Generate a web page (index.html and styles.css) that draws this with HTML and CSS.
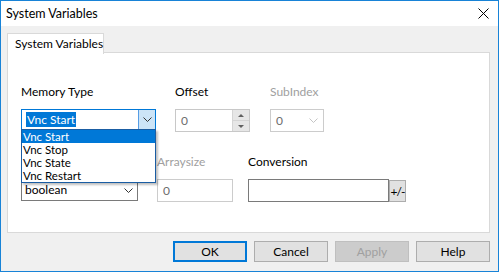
FILE: index.html
```html
<!DOCTYPE html>
<html lang="en">
<head>
    <meta charset="UTF-8">
    <title>System Variables</title>
    <link rel="stylesheet" href="styles.css">
</head>
<body>

<div class="window">
    <div class="titlebar">
        <span class="title">System Variables</span>
        <svg class="close" width="11" height="11" viewBox="0 0 11 11">
            <path d="M0.5 0.5 L10.5 10.5 M10.5 0.5 L0.5 10.5" stroke="#000" stroke-width="1"/>
        </svg>
    </div>

    <div class="content">
        <div class="tabs">
            <div class="tab">System Variables</div>
        </div>

        <div class="panel">
            <div class="row row-top">
                <div class="field field-memory">
                    <label>Memory Type</label>
                    <div class="combo combo-focus">
                        <span class="combo-text"><span class="selected">Vnc Start</span></span>
                        <span class="combo-btn active">
                            <svg width="9" height="5" viewBox="0 0 9 5"><path d="M0.5 0.5 L4.5 4.5 L8.5 0.5" fill="none" stroke="#333" stroke-width="1"/></svg>
                        </span>
                    </div>
                    <ul class="droplist">
                        <li class="current">Vnc Start</li>
                        <li>Vnc Stop</li>
                        <li>Vnc State</li>
                        <li>Vnc Restart</li>
                    </ul>
                </div>

                <div class="field field-offset">
                    <label>Offset</label>
                    <div class="spinner">
                        <span class="spin-text">0</span>
                        <span class="spin-btns">
                            <span class="spin-up"></span>
                            <span class="spin-down"></span>
                        </span>
                    </div>
                </div>

                <div class="field field-subindex">
                    <label class="disabled">SubIndex</label>
                    <div class="combo combo-disabled">
                        <span class="combo-text dim">0</span>
                        <span class="combo-btn">
                            <svg width="9" height="5" viewBox="0 0 9 5"><path d="M0.5 0.5 L4.5 4.5 L8.5 0.5" fill="none" stroke="#c4c4c4" stroke-width="1"/></svg>
                        </span>
                    </div>
                </div>
            </div>

            <div class="row row-bottom">
                <div class="field field-type">
                    <div class="combo combo-plain">
                        <span class="combo-text">boolean</span>
                        <span class="combo-btn">
                            <svg width="9" height="5" viewBox="0 0 9 5"><path d="M0.5 0.5 L4.5 4.5 L8.5 0.5" fill="none" stroke="#333" stroke-width="1"/></svg>
                        </span>
                    </div>
                </div>

                <div class="field field-arraysize">
                    <label class="disabled">Arraysize</label>
                    <div class="textbox textbox-disabled">0</div>
                </div>

                <div class="field field-conversion">
                    <label>Conversion</label>
                    <div class="conversion">
                        <div class="textbox textbox-wide"></div>
                        <button class="toggle">+/-</button>
                    </div>
                </div>
            </div>
        </div>

        <div class="buttons">
            <button class="btn btn-default">OK</button>
            <button class="btn">Cancel</button>
            <button class="btn btn-disabled">Apply</button>
            <button class="btn">Help</button>
        </div>
    </div>
</div>

</body>
</html>
```

FILE: styles.css
```css
* {
    box-sizing: border-box;
}

body {
    margin: 0;
    font-family: Lato, "Noto Sans", sans-serif;
    font-size: 12px;
    color: #000;
}

.window {
    width: 499px;
    height: 272px;
    border: 1px solid #1883d7;
    background: #f0f0f0;
}

.titlebar {
    height: 25px;
    background: #fff;
    display: flex;
    align-items: center;
    justify-content: space-between;
    padding: 0 9px 1px 5px;
}

.title {
    font-size: 12.5px;
}

.close {
    margin-top: 1px;
}

.content {
    padding: 7px 8px 0 6px;
}

.tabs {
    display: flex;
    height: 20px;
    position: relative;
    z-index: 1;
    margin-bottom: -1px;
}

.tab {
    width: 97px;
    height: 21px;
    background: #fff;
    border: 1px solid #d9d9d9;
    border-bottom: none;
    padding: 1px 0 0 7px;
    line-height: 17px;
    white-space: nowrap;
}

.panel {
    width: 483px;
    height: 181px;
    background: #fff;
    border: 1px solid #d9d9d9;
    padding: 31px 0 0 13px;
}

.row {
    display: flex;
    align-items: flex-start;
}

.row-bottom {
    margin-top: 22px;
}

.field {
    display: flex;
    flex-direction: column;
    position: relative;
}

.field label {
    height: 15px;
    line-height: 15px;
    margin-bottom: 10px;
    white-space: nowrap;
}

.field label.disabled {
    color: #a0a0a0;
}

.field-memory {
    width: 135px;
}

.field-offset {
    width: 75px;
    margin-left: 19px;
}

.field-subindex {
    width: 54px;
    margin-left: 20px;
}

.field-type {
    width: 117px;
    margin-top: 25px;
}

.field-arraysize {
    width: 76px;
    margin-left: 19px;
}

.field-conversion {
    margin-left: 15px;
}

/* combo boxes */
.combo {
    display: flex;
    height: 21px;
    border: 1px solid #7a7a7a;
    background: #fff;
}

.combo-text {
    flex: 1;
    padding-left: 3px;
    line-height: 19px;
}

.combo-text.dim {
    color: #6d6d6d;
    padding-left: 5px;
}

.combo-btn {
    width: 17px;
    display: flex;
    align-items: center;
    justify-content: center;
}

.combo-focus {
    border-color: #0078d7;
}

.combo-focus .combo-text {
    padding: 2px 0 0 4px;
    line-height: 15px;
}

.selected {
    background: #0078d7;
    color: #fff;
    display: inline-block;
    height: 15px;
    padding: 0 1px;
}

.combo-btn.active {
    background: #cce4f7;
    border-left: 1px solid #569de5;
}

.combo-disabled {
    height: 23px;
    border-color: #cccccc;
}

.combo-disabled .combo-text {
    line-height: 21px;
}

.combo-disabled .combo-btn {
    width: 20px;
}

.combo-plain {
    height: 22px;
}

.combo-plain .combo-text {
    line-height: 20px;
}

/* dropdown list of the memory type box */
.droplist {
    position: absolute;
    top: 45px;
    left: 0;
    width: 135px;
    margin: 0;
    padding: 0;
    list-style: none;
    background: #fff;
    border: 1px solid #1a5da3;
    box-shadow: 2px 2px 2px rgba(0, 0, 0, 0.25);
    z-index: 5;
}

.droplist li {
    height: 13px;
    line-height: 13px;
    font-size: 11.5px;
    padding-left: 1px;
    overflow: hidden;
}

.droplist li.current {
    background: #0078d7;
    color: #fff;
}

/* spinner */
.spinner {
    display: flex;
    height: 23px;
    border: 1px solid #c8c8c8;
    background: #fff;
}

.spin-text {
    flex: 1;
    padding-left: 5px;
    line-height: 21px;
    color: #6d6d6d;
}

.spin-btns {
    width: 17px;
    display: flex;
    flex-direction: column;
    border-left: 1px solid #d4d4d4;
}

.spin-up,
.spin-down {
    flex: 1;
    background: #e6e6e6;
    display: flex;
    align-items: center;
    justify-content: center;
}

.spin-up {
    border-bottom: 1px solid #d4d4d4;
}

.spin-up::after {
    content: "";
    border-left: 3px solid transparent;
    border-right: 3px solid transparent;
    border-bottom: 3px solid #606060;
}

.spin-down::after {
    content: "";
    border-left: 3px solid transparent;
    border-right: 3px solid transparent;
    border-top: 3px solid #606060;
}

/* text boxes */
.textbox {
    height: 23px;
    border: 1px solid #7a7a7a;
    background: #fff;
    padding-left: 5px;
    line-height: 21px;
}

.textbox-disabled {
    border-color: #cccccc;
    color: #6d6d6d;
}

.conversion {
    display: flex;
    align-items: flex-start;
}

.textbox-wide {
    width: 141px;
}

.toggle {
    width: 17px;
    height: 22px;
    margin-top: 1px;
    padding: 0;
    border: 1px solid #adadad;
    background: #e1e1e1;
    font-family: inherit;
    font-size: 12px;
    letter-spacing: -1px;
}

/* dialog buttons */
.buttons {
    display: flex;
    justify-content: flex-end;
    gap: 7px;
    margin-top: 8px;
    padding-right: 0;
}

.btn {
    width: 74px;
    height: 21px;
    border: 1px solid #adadad;
    background: #e1e1e1;
    font-family: inherit;
    font-size: 12px;
    padding: 0;
    color: #000;
}

.btn-default {
    border: 2px solid #0078d7;
}

.btn-disabled {
    background: #cccccc;
    border-color: #bfbfbf;
    color: #a0a0a0;
}
```
